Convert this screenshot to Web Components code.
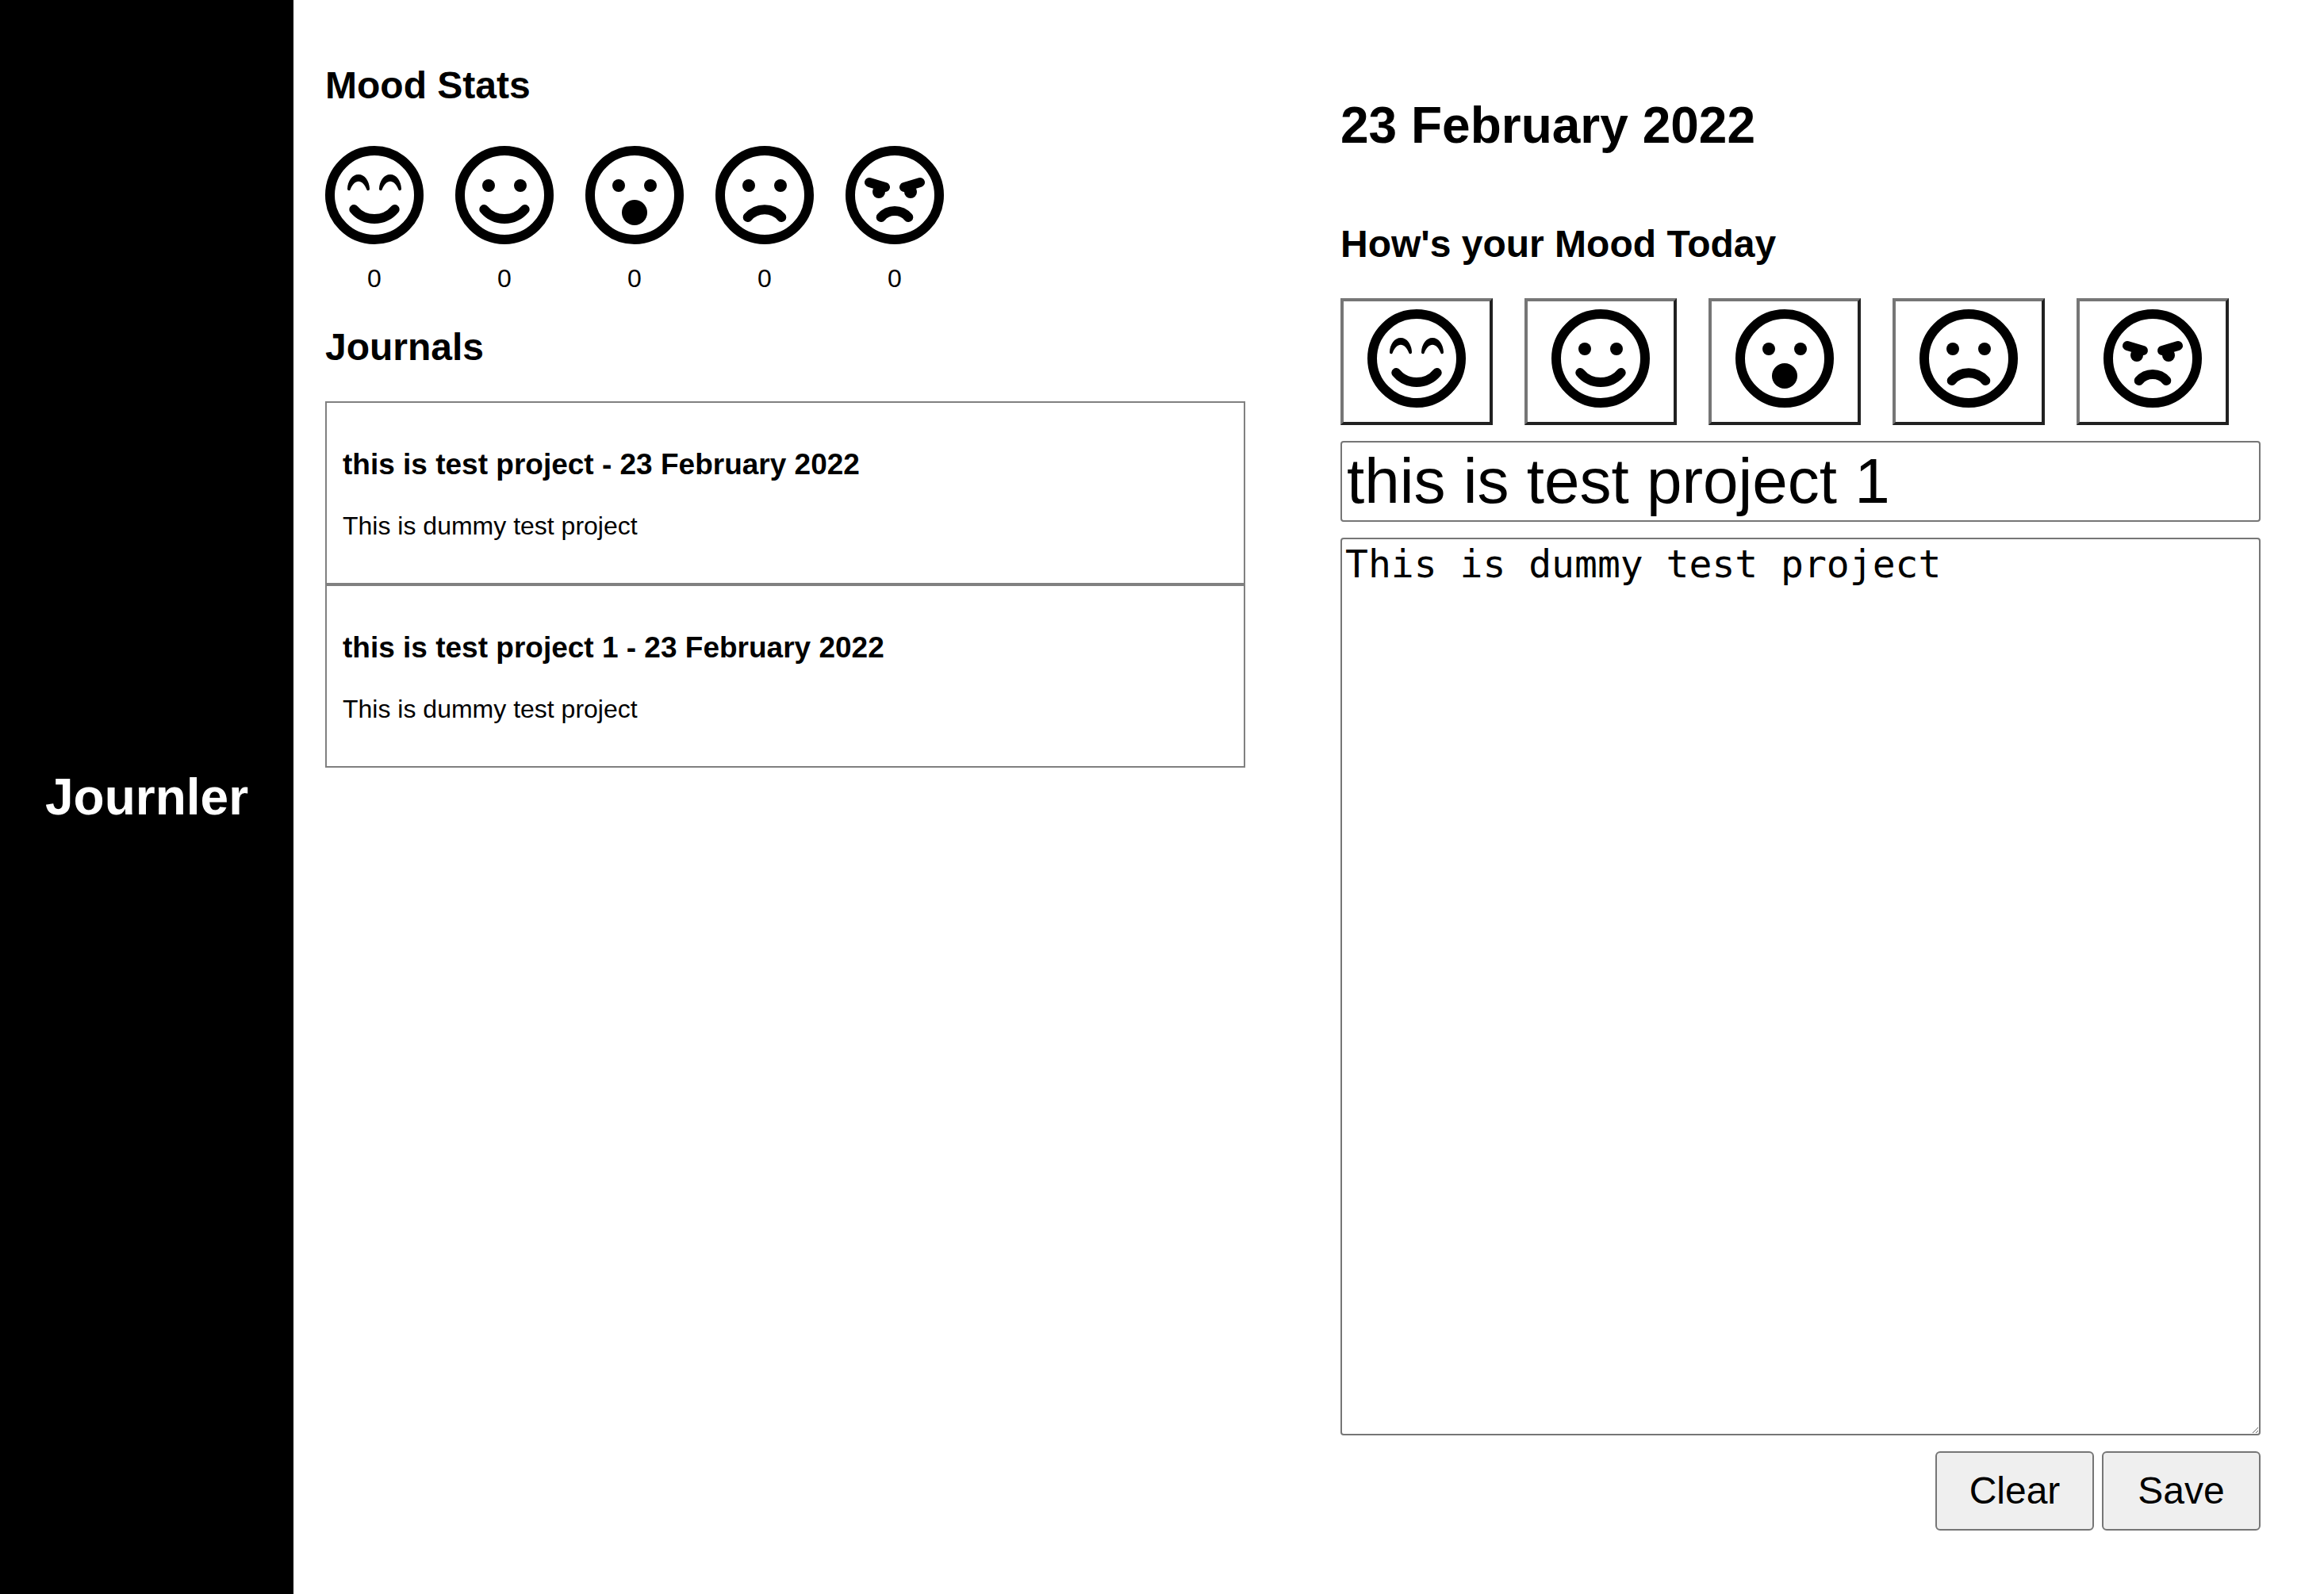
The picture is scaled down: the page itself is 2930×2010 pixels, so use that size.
<!DOCTYPE html>
<html lang="en">
<head>
<meta charset="utf-8">
<title>Journler</title>
<style>
  body { margin: 0; font-family: "Liberation Sans", Arial, sans-serif; font-size: 32px; line-height: 36px; color: #000; background: #fff; }
</style>
</head>
<body>
<journal-app></journal-app>
<script>
const define = (name, html, setup) => {
  const template = document.createElement('template');
  template.innerHTML = html;
  customElements.define(name, class extends HTMLElement {
    static observedAttributes = ['mood'];
    constructor() {
      super();
      this.attachShadow({ mode: 'open' }).append(template.content.cloneNode(true));
    }
    attributeChangedCallback(attribute, before, mood) {
      if (setup) setup(this.shadowRoot, mood);
    }
  });
};

const smile = '<path class="line" d="M36.3 80A33.5 33.5 0 0 0 87.7 80"/>';
const eyes = '<circle cx="42" cy="50" r="8"/><circle cx="82" cy="50" r="8"/>';
const arch = 'M28 54C28.5 44 34 36 42 36S55.5 44 56 54C56 56.6 53 57 52.3 55C50 48.5 46 44.7 42 44.7S34 48.5 31.7 55C31 57 28 56.6 28 54Z';
const faces = {
  happy: `<path d="${arch}"/><path d="${arch}" transform="translate(40 0)"/>${smile}`,
  content: eyes + smile,
  surprised: eyes + '<circle cx="62" cy="84" r="16"/>',
  sad: eyes + '<path class="line" d="M40.7 90A28.1 28.1 0 0 1 83.3 90"/>',
  angry: '<circle cx="42" cy="58" r="8"/><circle cx="82" cy="58" r="8"/><path class="line" d="M30 46L50 52M94 46L74 52M44.7 90A22.7 22.7 0 0 1 79.3 90"/>'
};
const moods = Object.keys(faces);

define('mood-face', `
  <style>
    :host { display: block; }
    svg { display: block; width: 124px; height: 124px; }
    .line { fill: none; stroke: #000; stroke-width: 12; stroke-linecap: round; stroke-linejoin: round; }
  </style>
  <svg viewBox="0 0 124 124" aria-hidden="true"></svg>`,
  (root, mood) => {
    root.querySelector('svg').innerHTML =
      '<circle class="line" cx="62" cy="62" r="56"/>' + faces[mood];
  });

define('mood-stat', `
  <style>
    :host { display: flex; flex-direction: column; align-items: center; gap: 24px; line-height: 38px; }
  </style>
  <mood-face></mood-face><span><slot></slot></span>`,
  (root, mood) => root.querySelector('mood-face').setAttribute('mood', mood));

define('mood-button', `
  <style>
    :host { display: block; }
    button { display: block; box-sizing: border-box; margin: 0; padding: 10px 30px 18px; background: #fff; border: 4px solid; border-color: #767676 #212121 #212121 #767676; border-radius: 0; }
  </style>
  <button type="button"><mood-face></mood-face></button>`,
  (root, mood) => {
    root.querySelector('button').setAttribute('aria-label', mood);
    root.querySelector('mood-face').setAttribute('mood', mood);
  });

define('journal-entry', `
  <style>
    :host { display: block; border: 2px solid #808080; padding: 20px; }
    h3 { margin: 36px 0 38px; font-size: 37px; line-height: 43px; }
    p { margin: 0 0 34px; }
  </style>
  <h3><slot name="title"></slot></h3>
  <p><slot></slot></p>`);

define('side-bar', `
  <style>
    :host { display: flex; align-items: center; justify-content: center; flex: none; width: 370px; background: #000; color: #fff; }
    h1 { margin: 0; font-size: 64px; line-height: 73px; }
  </style>
  <h1><slot></slot></h1>`);

define('journal-list', `
  <style>
    :host { display: block; }
    h2 { margin: 0; font-size: 48px; line-height: 56px; }
    .moods { display: flex; gap: 40px; margin: 48px 0 40px; }
    .entries { margin-top: 40px; }
  </style>
  <h2>Mood Stats</h2>
  <div class="moods">${moods.map(m => `<mood-stat mood="${m}">0</mood-stat>`).join('')}</div>
  <h2>Journals</h2>
  <div class="entries"><slot></slot></div>`);

define('journal-form', `
  <style>
    :host { display: flex; flex-direction: column; }
    h1 { margin: 42px 0 86px; font-size: 64px; line-height: 72px; }
    h2 { margin: 0 0 40px; font-size: 48px; line-height: 56px; }
    .moods { display: flex; gap: 40px; }
    form { display: flex; flex: 1; flex-direction: column; gap: 20px; margin-top: 20px; }
    input, textarea, .actions button { box-sizing: border-box; margin: 0; color: #000; border: 2px solid #767676; }
    input, textarea { width: 100%; background: #fff; border-radius: 4px; }
    input { padding: 3px 6px; font: 80px/92px "Liberation Sans", Arial, sans-serif; }
    textarea { flex: 1; padding: 4px; font: 48px/54px "DejaVu Sans Mono", monospace; resize: both; }
    .actions { display: flex; justify-content: flex-end; gap: 10px; }
    .actions button { width: 200px; height: 100px; padding: 0; background: #efefef; border-radius: 6px; font: 48px/54px "Liberation Sans", Arial, sans-serif; }
  </style>
  <h1>23 February 2022</h1>
  <h2>How's your Mood Today</h2>
  <div class="moods">${moods.map(m => `<mood-button mood="${m}"></mood-button>`).join('')}</div>
  <form>
    <input type="text" aria-label="Title" value="this is test project 1">
    <textarea aria-label="Journal" spellcheck="false">This is dummy test project</textarea>
    <div class="actions"><button type="button">Clear</button><button type="button">Save</button></div>
  </form>`);

define('journal-app', `
  <style>
    :host { display: flex; min-height: 100vh; }
    journal-list, journal-form { flex: 1; min-width: 0; box-sizing: border-box; padding: 80px 80px 80px 40px; }
  </style>
  <side-bar>Journler</side-bar>
  <journal-list>
    <journal-entry><span slot="title">this is test project - 23 February 2022</span>This is dummy test project</journal-entry>
    <journal-entry><span slot="title">this is test project 1 - 23 February 2022</span>This is dummy test project</journal-entry>
  </journal-list>
  <journal-form></journal-form>`);
</script>
</body>
</html>
